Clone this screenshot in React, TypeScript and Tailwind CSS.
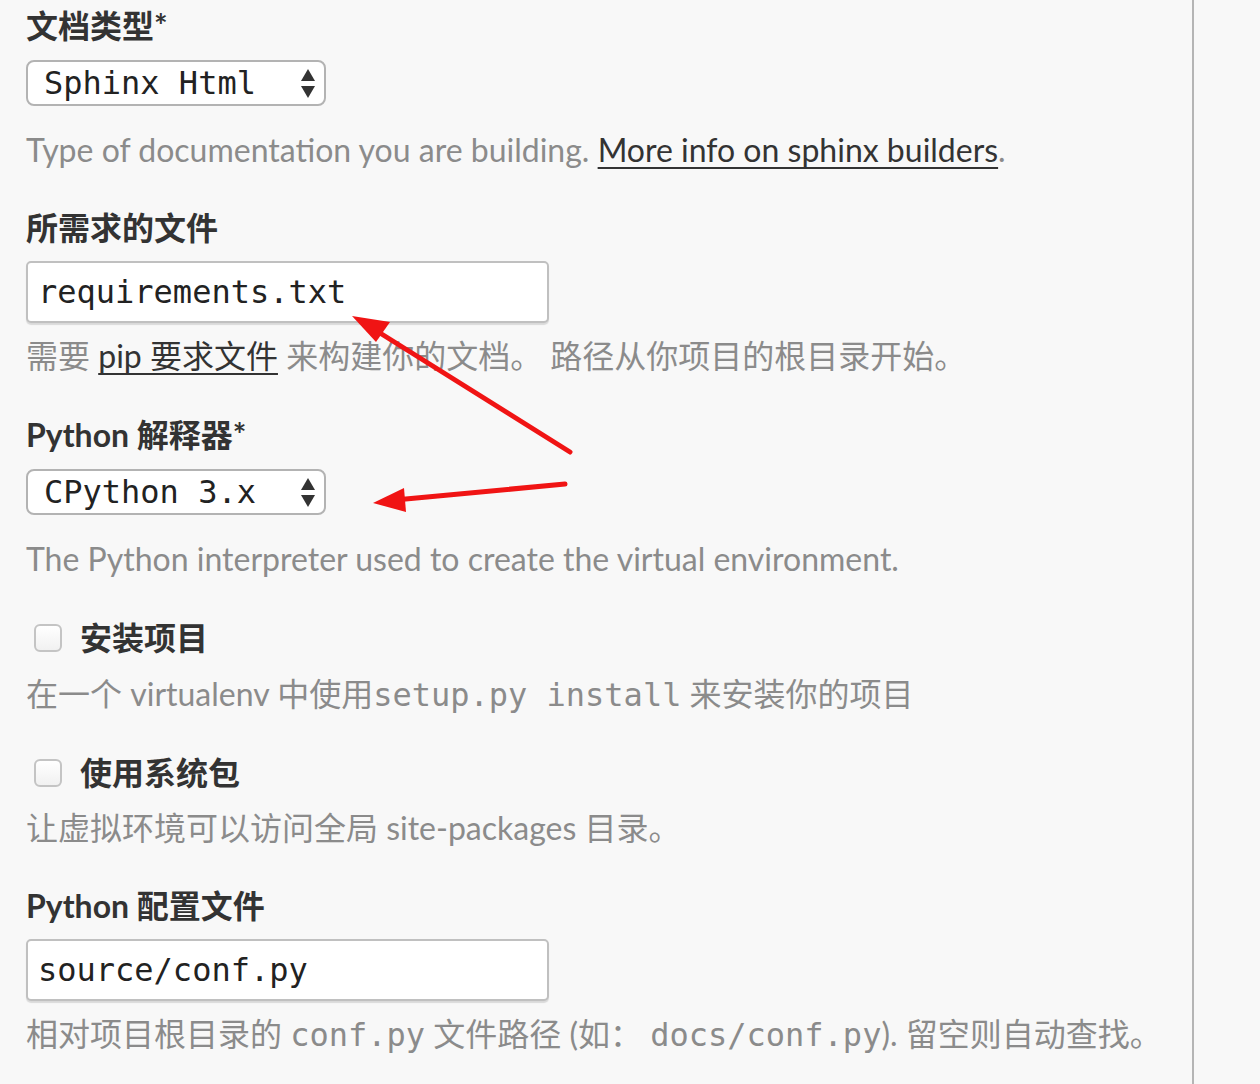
import React from 'react';

const sans = "font-['Lato','Noto_Sans_CJK_SC',sans-serif]";
const mono = "font-['DejaVu_Sans_Mono','Noto_Sans_CJK_SC',monospace]";

function Label({ children, className = '' }: { children: React.ReactNode; className?: string }) {
  return <div className={`text-[32px] leading-[38px] font-bold text-[#333] ${className}`}>{children}</div>;
}

function Help({ children, className = '' }: { children: React.ReactNode; className?: string }) {
  return <div className={`text-[32px] leading-[38px] text-[#8b8b8b] whitespace-nowrap ${className}`}>{children}</div>;
}

function SelectBox({ value, className = '' }: { value: string; className?: string }) {
  return (
    <div
      className={`flex h-[46px] w-[300px] items-center justify-between rounded-[8px] border-2 border-[#b3b3b3] bg-white pl-[16px] pr-[8px] ${className}`}
    >
      <span className={`${mono} text-[32px] leading-none text-[#222]`}>{value}</span>
      <svg width="16" height="34" viewBox="0 0 16 34">
        <path d="M8 3 L15 15 L1 15 Z" fill="#333" />
        <path d="M1 20 L15 20 L8 32 Z" fill="#333" />
      </svg>
    </div>
  );
}

function TextInput({ value, className = '' }: { value: string; className?: string }) {
  return (
    <div
      className={`flex h-[62px] w-[523px] items-center rounded-[5px] border-2 border-[#c0c0c0] bg-white pl-[10px] shadow-[0_2px_1px_rgba(0,0,0,0.12)] ${className}`}
    >
      <span className={`${mono} text-[32px] leading-none text-[#222]`}>{value}</span>
    </div>
  );
}

function Check({ label, className = '' }: { label: string; className?: string }) {
  return (
    <div className={`flex items-center ${className}`}>
      <div className="ml-[8px] h-[28px] w-[28px] rounded-[6px] border-2 border-[#c4c4c4] bg-gradient-to-b from-white to-[#f1f1f1]" />
      <Label className="ml-[18px]">{label}</Label>
    </div>
  );
}

export default function App() {
  return (
    <div className={`relative min-h-[1084px] w-[1260px] overflow-hidden bg-[#f8f8f8] ${sans}`}>
      <div className="min-h-[1084px] w-[1194px] border-r-2 border-[#b5b5b5] pl-[26px] pt-[7px]">
        <Label>文档类型*</Label>
        <SelectBox value="Sphinx Html" className="mt-[15px]" />
        <Help className="mt-[25px]">
          Type of documentation you are building.{' '}
          <span className="text-[#333] underline underline-offset-[5px] decoration-2">More info on sphinx builders</span>.
        </Help>

        <Label className="mt-[40px]">所需求的文件</Label>
        <TextInput value="requirements.txt" className="mt-[14px]" />
        <Help className="mt-[14px]">
          需要 <span className="text-[#333] underline underline-offset-[5px] decoration-2">pip 要求文件</span> 来构建你的文档。 路径从你项目的根目录开始。
        </Help>

        <Label className="mt-[41px]">Python 解释器*</Label>
        <SelectBox value="CPython 3.x" className="mt-[15px]" />
        <Help className="mt-[25px]">The Python interpreter used to create the virtual environment.</Help>

        <Check label="安装项目" className="mt-[41px]" />
        <Help className="mt-[18px]">
          在一个 virtualenv 中使用<span className={`${mono} text-[32px]`}>setup.py install</span> 来安装你的项目
        </Help>

        <Check label="使用系统包" className="mt-[40px]" />
        <Help className="mt-[17px]">让虚拟环境可以访问全局 site-packages 目录。</Help>

        <Label className="mt-[40px]">Python 配置文件</Label>
        <TextInput value="source/conf.py" className="mt-[14px]" />
        <Help className="mt-[14px]">
          相对项目根目录的 <span className={`${mono} text-[32px]`}>conf.py</span> 文件路径 (如：{' '}
          <span className={`${mono} text-[32px]`}>docs/conf.py</span>). 留空则自动查找。
        </Help>
      </div>

      {/* annotation arrows */}
      <svg className="pointer-events-none absolute left-0 top-0" width="1260" height="1084">
        <line x1="570" y1="452" x2="372" y2="328" stroke="#f01414" strokeWidth="5" strokeLinecap="round" />
        <path d="M352 316 L390 322 L376 342 Z" fill="#f01414" />
        <line x1="565" y1="484" x2="395" y2="500" stroke="#f01414" strokeWidth="5" strokeLinecap="round" />
        <path d="M373 503 L404 488 L406 512 Z" fill="#f01414" />
      </svg>
    </div>
  );
}
